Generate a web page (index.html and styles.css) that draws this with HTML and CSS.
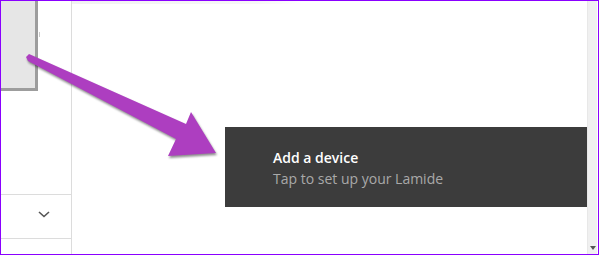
FILE: index.html
```html
<!DOCTYPE html>
<html>
<head>
<meta charset="utf-8">
<link rel="stylesheet" href="styles.css">
</head>
<body>
<div class="frame">
  <aside class="side">
    <div class="thumb"><span class="tick"></span></div>
    <div class="side-fill"></div>
    <div class="side-row">
      <svg class="chev" width="12" height="7" viewBox="0 0 12 7"><path d="M1 1 L6 5.5 L11 1" fill="none" stroke="#555" stroke-width="1.6"/></svg>
    </div>
    <div class="side-end"></div>
  </aside>
  <main class="main">
    <div class="topstrip"></div>
    <div class="toast">
      <div class="toast-title">Add a device</div>
      <div class="toast-sub">Tap to set up your Lamide</div>
    </div>
  </main>
  <div class="scroll"><span class="scroll-arrow"></span></div>
  <svg class="arrow" width="599" height="255" viewBox="0 0 599 255">
    <polygon points="26,57 29,54 186,124 191,112 216,153 168,156 176,139 28,61" fill="#ad3ec0"/>
  </svg>
</div>
</body>
</html>
```

FILE: styles.css
```css
* { box-sizing: border-box; }
html, body { margin: 0; padding: 0; background: #fff; }
.frame {
  position: relative;
  width: 599px;
  height: 255px;
  border: 1px solid #8a00ff;
  display: grid;
  grid-template-columns: 71px 515px 10px;
  overflow: hidden;
  font-family: "Open Sans", "Noto Sans", sans-serif;
}
.side {
  display: flex;
  flex-direction: column;
  border-right: 1px solid #dcdcdc;
}
.thumb {
  position: relative;
  width: 37px;
  height: 90px;
  background: #e6e6e6;
  border-right: 3px solid #9d9d9d;
  border-bottom: 3px solid #9d9d9d;
}
.tick {
  position: absolute;
  right: -5px;
  top: 31px;
  width: 1px;
  height: 5px;
  background: #c8c8c8;
}
.side-fill { height: 104px; border-bottom: 1px solid #dcdcdc; }
.side-row {
  height: 44px;
  border-bottom: 1px solid #dcdcdc;
  display: flex;
  align-items: center;
  padding-left: 37px;
  padding-bottom: 4px;
}
.chev { display: block; }
.side-end { flex: 1; }
.main {
  display: flex;
  flex-direction: column;
}
.topstrip {
  height: 3px;
  width: 230px;
  background: linear-gradient(90deg, #f2f2f2, #f7f7f7 80%, #fff);
}
.toast {
  margin-top: 123px;
  margin-left: 153px;
  margin-right: -1px;
  height: 80px;
  background: #3c3c3c;
  padding: 20px 0 0 48px;
  line-height: 21px;
  font-size: 14px;
}
.toast-title { color: #fff; font-weight: 600; }
.toast-sub { color: #a9a9a9; }
.scroll {
  position: relative;
  z-index: 1;
  background: #f0f0f0;
  border-left: 1px solid #e8e8e8;
}
.scroll-arrow {
  position: absolute;
  left: 2px;
  bottom: 4px;
  width: 0;
  height: 0;
  border-left: 3px solid transparent;
  border-right: 3px solid transparent;
  border-top: 4px solid #555;
}
.arrow {
  position: absolute;
  left: -1px;
  top: -1px;
  z-index: 2;
  filter: drop-shadow(1px 2px 1px rgba(0,0,0,0.45));
}
```
